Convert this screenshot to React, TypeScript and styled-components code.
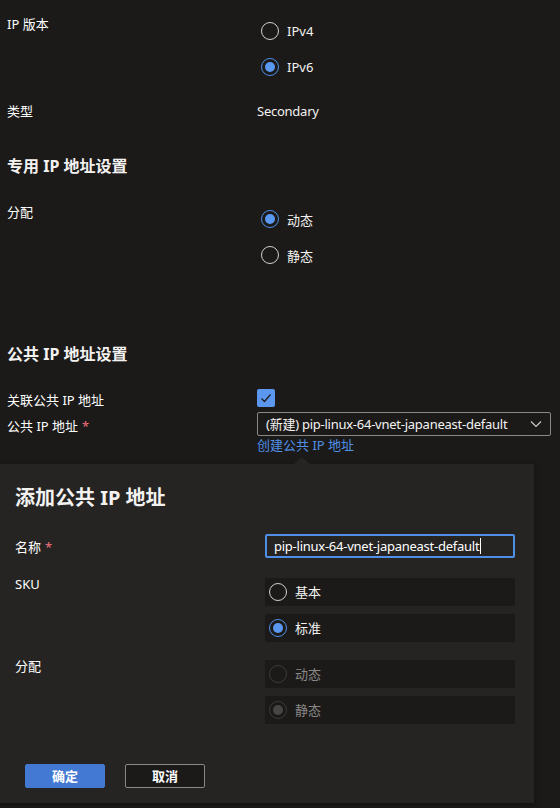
import React from "react";
import styled, { createGlobalStyle } from "styled-components";

const GlobalStyle = createGlobalStyle`
  html, body {
    margin: 0;
    padding: 0;
    background: #1b1a19;
  }
  body {
    font-family: "Noto Sans", "Noto Sans CJK SC", sans-serif;
    color: #f3f2f1;
    font-size: 13px;
  }
  * { box-sizing: border-box; }
`;

const Page = styled.div`
  width: 560px;
  height: 808px;
  overflow: hidden;
  background: #1b1a19;
`;

const Main = styled.div`
  display: flex;
  flex-direction: column;
  padding: 13.5px 9px 0 7px;
`;

const Row = styled.div<{ $mt?: number; $col?: number }>`
  display: grid;
  grid-template-columns: ${(p) => p.$col ?? 250}px 1fr;
  align-items: start;
  margin-top: ${(p) => p.$mt ?? 0}px;
`;

const Label = styled.div<{ $pt?: number }>`
  font-size: 13px;
  line-height: 20px;
  color: #ffffff;
  padding-top: ${(p) => p.$pt ?? 0}px;
`;

const Required = styled.span`
  color: #f1707b;
  margin-left: 4px;
`;

const Value = styled.div`
  font-size: 13px;
  line-height: 20px;
  letter-spacing: -0.25px;
  color: #f3f2f1;
`;

const Heading = styled.h2<{ $mt: number }>`
  margin: ${(p) => p.$mt}px 0 0 0;
  font-size: 16px;
  line-height: 22px;
  font-weight: 700;
  color: #f3f2f1;
`;

const RadioGroup = styled.div<{ $mt?: number; $gap: number }>`
  display: flex;
  flex-direction: column;
  gap: ${(p) => p.$gap}px;
  margin-top: ${(p) => p.$mt ?? 0}px;
`;

const RadioItem = styled.div`
  display: flex;
  align-items: center;
  gap: 8px;
  height: 20px;
  padding-left: 4px;
  font-size: 13px;
  color: #f3f2f1;
`;

const OptionBox = styled.div<{ $disabled?: boolean }>`
  display: flex;
  align-items: center;
  gap: 8px;
  height: 28px;
  padding-left: 4px;
  background: #1b1a19;
  font-size: 13px;
  color: ${(p) => (p.$disabled ? "#8a8886" : "#f3f2f1")};
`;

const Circle = styled.span<{ $checked?: boolean; $disabled?: boolean }>`
  width: 18px;
  height: 18px;
  border-radius: 50%;
  flex: none;
  display: flex;
  align-items: center;
  justify-content: center;
  border: 1px solid
    ${(p) =>
      p.$disabled ? "#3b3a39" : p.$checked ? "#4f8fe8" : "#d2d0ce"};
  &::after {
    content: "";
    display: ${(p) => (p.$checked ? "block" : "none")};
    width: 10px;
    height: 10px;
    border-radius: 50%;
    background: ${(p) => (p.$disabled ? "#484644" : "#5a98f0")};
  }
`;

const Control = styled.div`
  display: flex;
  flex-direction: column;
`;

const CheckBox = styled.span`
  width: 18px;
  height: 18px;
  margin-top: -1px;
  border-radius: 2px;
  background: #5b97ef;
  display: flex;
  align-items: center;
  justify-content: center;
`;

const Select = styled.div`
  position: relative;
  height: 24px;
  border: 1px solid #8a8886;
  border-radius: 2px;
  padding: 0 28px 0 8px;
  display: flex;
  align-items: center;
  font-size: 13px;
  letter-spacing: -0.25px;
  color: #f3f2f1;
  white-space: nowrap;
`;

const Chevron = styled.svg`
  position: absolute;
  right: 8px;
  top: 5px;
`;

const Link = styled.a`
  margin-top: 1px;
  font-size: 13px;
  line-height: 16px;
  color: #4f8fe6;
  text-decoration: none;
  align-self: flex-start;
`;

const Panel = styled.section`
  position: relative;
  width: 534px;
  margin-top: 11px;
  background: #252423;
  padding: 20px 19px 15px 15px;
  box-shadow: 0 2px 6px rgba(0, 0, 0, 0.35);
  &::before {
    content: "";
    position: absolute;
    top: -7px;
    left: 294px;
    border-left: 8px solid transparent;
    border-right: 8px solid transparent;
    border-bottom: 7px solid #252423;
  }
`;

const PanelTitle = styled.h1`
  margin: 0;
  font-size: 20px;
  line-height: 28px;
  font-weight: 700;
  color: #f3f2f1;
`;

const TextInput = styled.div`
  height: 24px;
  border: 2px solid #4f8fe8;
  border-radius: 2px;
  padding: 0 7px;
  display: flex;
  align-items: center;
  font-size: 13px;
  letter-spacing: -0.25px;
  color: #ffffff;
  white-space: nowrap;
`;

const Caret = styled.span`
  display: inline-block;
  width: 1px;
  height: 16px;
  margin-left: 1px;
  background: #ffffff;
`;

const Buttons = styled.div`
  display: flex;
  gap: 20px;
  margin-top: 40px;
  padding-left: 10px;
`;

const Button = styled.button<{ $primary?: boolean }>`
  width: 80px;
  height: 24px;
  border-radius: 2px;
  font-family: "Noto Sans", "Noto Sans CJK SC", sans-serif;
  font-size: 13px;
  font-weight: 700;
  color: #ffffff;
  cursor: pointer;
  padding: 0;
  background: ${(p) => (p.$primary ? "#4479d3" : "#1b1a19")};
  border: 1px solid ${(p) => (p.$primary ? "#4479d3" : "#8a8886")};
`;

const Radio = ({ label, checked }: { label: string; checked?: boolean }) => (
  <RadioItem>
    <Circle $checked={checked} />
    <span>{label}</span>
  </RadioItem>
);

const Option = ({
  label,
  checked,
  disabled,
}: {
  label: string;
  checked?: boolean;
  disabled?: boolean;
}) => (
  <OptionBox $disabled={disabled}>
    <Circle $checked={checked} $disabled={disabled} />
    <span>{label}</span>
  </OptionBox>
);

export default function App() {
  return (
    <Page lang="zh-CN">
      <GlobalStyle />
      <Main>
        <Row>
          <Label>IP 版本</Label>
          <RadioGroup $mt={7} $gap={16}>
            <Radio label="IPv4" />
            <Radio label="IPv6" checked />
          </RadioGroup>
        </Row>
        <Row $mt={24}>
          <Label>类型</Label>
          <Value>Secondary</Value>
        </Row>
        <Heading $mt={34.5}>专用 IP 地址设置</Heading>
        <Row $mt={25}>
          <Label>分配</Label>
          <RadioGroup $mt={7} $gap={16}>
            <Radio label="动态" checked />
            <Radio label="静态" />
          </RadioGroup>
        </Row>
        <Heading $mt={77.5}>公共 IP 地址设置</Heading>
        <Row $mt={25}>
          <Label>关联公共 IP 地址</Label>
          <CheckBox>
            <svg width="14" height="14" viewBox="0 0 14 14">
              <polyline
                points="2.5,7.5 5.5,10.5 11.5,3.5"
                fill="none"
                stroke="#1b1a19"
                strokeWidth="1.2"
              />
            </svg>
          </CheckBox>
        </Row>
        <Row $mt={2}>
          <Label $pt={4}>
            公共 IP 地址<Required>*</Required>
          </Label>
          <Control>
            <Select>
              (新建) pip-linux-64-vnet-japaneast-default
              <Chevron width="12" height="12" viewBox="0 0 12 12">
                <polyline
                  points="1,3.5 6,8.5 11,3.5"
                  fill="none"
                  stroke="#d2d0ce"
                  strokeWidth="1.1"
                />
              </Chevron>
            </Select>
            <Link href="#">创建公共 IP 地址</Link>
          </Control>
        </Row>
      </Main>
      <Panel>
        <PanelTitle>添加公共 IP 地址</PanelTitle>
        <Row $mt={22}>
          <Label $pt={3}>
            名称<Required>*</Required>
          </Label>
          <TextInput>
            pip-linux-64-vnet-japaneast-default
            <Caret />
          </TextInput>
        </Row>
        <Row $mt={16}>
          <Label>SKU</Label>
          <RadioGroup $mt={4} $gap={8}>
            <Option label="基本" />
            <Option label="标准" checked />
          </RadioGroup>
        </Row>
        <Row $mt={14}>
          <Label>分配</Label>
          <RadioGroup $mt={4} $gap={8}>
            <Option label="动态" disabled />
            <Option label="静态" checked disabled />
          </RadioGroup>
        </Row>
        <Buttons>
          <Button $primary>确定</Button>
          <Button>取消</Button>
        </Buttons>
      </Panel>
    </Page>
  );
}
